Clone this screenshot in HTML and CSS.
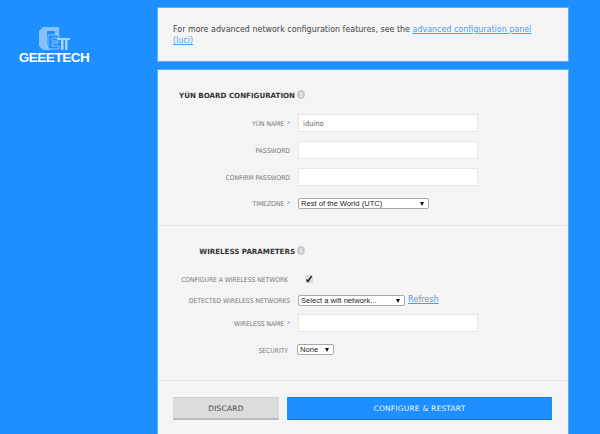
FILE: index.html
```html
<!DOCTYPE html>
<html lang="en">
<head>
<meta charset="utf-8">
<title>Yún Board Configuration</title>
<link rel="stylesheet" href="styles.css">
</head>
<body>
<div class="page">
  <aside class="sidebar">
    <div class="logo">
      <svg class="logo-mark" width="31" height="25" viewBox="0 0 31 25">
        <path class="mark-g" d="M4 1H20V9H16V5H8V19H11V24H4L0 20V5Z"/>
        <path class="mark-e" d="M9 9H20V12H13V15H19V17H13V20H20V23H9Z"/>
        <path class="mark-t" d="M18 12H31V14H28.500V24H26V14H24.500V24H22V14H18Z"/>
      </svg>
      <div class="logo-text">GEEETECH</div>
    </div>
  </aside>
  <main class="main">
    <section class="panel notice">
      <p>For more advanced network configuration features, see the <a href="#">advanced configuration panel (luci)</a></p>
    </section>
    <section class="panel form-panel">
      <div class="group group-board">
        <h2 class="title">YÚN BOARD CONFIGURATION <span class="info">i</span></h2>
        <div class="row"><label>YÚN NAME <b>*</b></label><input class="text" type="text" value="iduino"></div>
        <div class="row"><label>PASSWORD</label><input class="text" type="text"></div>
        <div class="row"><label>CONFIRM PASSWORD</label><input class="text" type="text"></div>
        <div class="row row-tz"><label>TIMEZONE <b>*</b></label><div class="fake-select tz">Rest of the World (UTC)<i></i></div></div>
      </div>
      <div class="group group-wifi">
        <h2 class="title title-wifi">WIRELESS PARAMETERS <span class="info">i</span></h2>
        <div class="row row-check"><label class="short">CONFIGURE A WIRELESS NETWORK</label><span class="check"><svg width="8" height="8" viewBox="0 0 8 8"><path d="M1.500 4.500L3 6.500L6.500 1" fill="none" stroke="#222" stroke-width="1.500"/></svg></span></div>
        <div class="row row-detect"><label>DETECTED WIRELESS NETWORKS</label><div class="fake-select wifi">Select a wifi network...<i></i></div><a class="refresh" href="#">Refresh</a></div>
        <div class="row row-name"><label>WIRELESS NAME <b>*</b></label><input class="text" type="text"></div>
        <div class="row row-sec"><label class="short">SECURITY</label><div class="fake-select sec">None<i></i></div></div>
      </div>
      <div class="actions">
        <button class="btn discard" type="button">DISCARD</button>
        <button class="btn submit" type="button">CONFIGURE &amp; RESTART</button>
      </div>
    </section>
  </main>
</div>
</body>
</html>
```

FILE: styles.css
```css
* { box-sizing: border-box; }
html, body { margin: 0; height: 100%; overflow: hidden; }
body { background: #1e8fff; font-family: "DejaVu Sans Condensed", "DejaVu Sans", Verdana, sans-serif; color: #444; }
.page { display: flex; height: 434px; }
.sidebar { width: 157px; flex: none; padding: 26px 0 0 19px; }
.logo { display: flex; flex-direction: column; align-items: center; width: 70px; }
.logo-mark { display: block; margin-left: 1px; }
.mark-g { fill: #86c1fb; }
.mark-e { fill: #1e8fff; stroke: #cfe6fd; stroke-width: .6; }
.mark-t { fill: #a6d2fc; }
.logo-text { font-family: "Liberation Sans", sans-serif; font-weight: 700; font-size: 13.5px; line-height: 12px; color: #fff; letter-spacing: -.45px; white-space: nowrap; margin-top: 1px; }
.main { width: 412px; flex: none; padding-top: 7px; display: flex; flex-direction: column; gap: 7px; }
.panel { background: #f4f4f4; border: 1px solid #5eaefc; }
.notice { height: 55px; padding: 16px 15px 0; }
.notice p { margin: 0; font-size: 8.85px; line-height: 11px; color: #444; }
a { color: #4f9cf6; }
.form-panel { flex: 1; border-bottom: 0; }
.group { border-bottom: 1px solid #e4e4e4; }
.group-board { height: 156px; padding-top: 20px; }
.group-wifi { height: 155px; padding-top: 20px; }
.title { margin: 0 0 12px; width: 147px; font: 700 7.1px/12px "DejaVu Sans", sans-serif; color: #333; white-space: nowrap; display: flex; justify-content: flex-end; align-items: center; gap: 2px; }
.title-wifi { margin-bottom: 16px; }
.info { width: 8px; height: 9px; border-radius: 50%; background: #c8c8c8; color: #f4f4f4; font: 700 7px/9px "DejaVu Serif", serif; text-align: center; margin-top: -3px; }
.row { display: flex; align-items: center; height: 18px; margin-bottom: 9px; }
.row label { width: 132px; flex: none; margin-right: 8px; padding-top: 1px; text-align: right; font-size: 6.7px; line-height: 10px; color: #777; white-space: nowrap; }
.row label b { color: #6aa5f5; font-weight: 400; margin-left: 1px; }
.row .short { width: 130px; margin-right: 0; }
.text { width: 180px; height: 18px; border: 1px solid #e6e6e6; background: #fff; padding: 0 4px; font: 7.5px "DejaVu Sans Condensed", "DejaVu Sans", sans-serif; color: #666; outline: 0; }
.fake-select { position: relative; height: 11px; border: 1px solid #a8a8a8; border-radius: 2px; background: #fff; font: 7.6px/9px "Liberation Sans", sans-serif; color: #222; padding-left: 2px; white-space: nowrap; }
.fake-select i { position: absolute; right: 4px; top: 3px; width: 0; height: 0; border: 2.5px solid transparent; border-top: 4px solid #111; border-bottom: 0; }
.tz { width: 131px; }
.wifi { width: 107px; }
.sec { width: 37px; margin-left: 9px; }
.row-tz { margin: 12px 0 0; height: 11px; }
.row-check { height: 10px; margin-bottom: 10px; }
.check { width: 8px; height: 8px; margin-left: 17px; background: #ddd; border-radius: 1px; display: flex; }
.row-detect { height: 12px; margin-bottom: 8px; }
.refresh { font-size: 9px; margin-left: 3px; margin-top: -3px; }
.row-name { margin-bottom: 11px; }
.row-sec { height: 12px; margin-bottom: 0; }
.row-sec label { padding-top: 3px; }
.actions { display: flex; gap: 8px; padding: 16px 15px 0; }
.btn { height: 23px; border: 0; font: 7.5px "DejaVu Sans", sans-serif; letter-spacing: .2px; border-radius: 1px; }
.discard { width: 106px; background: #dcdcdc; color: #444; border-bottom: 2px solid #bbb; border-top: 1px solid #d0d0d0; }
.submit { width: 265px; background: #1e8fff; color: #e6f2ff; border-bottom: 1px solid #0d72c0; border-top: 1px solid #1280d8; }
```
